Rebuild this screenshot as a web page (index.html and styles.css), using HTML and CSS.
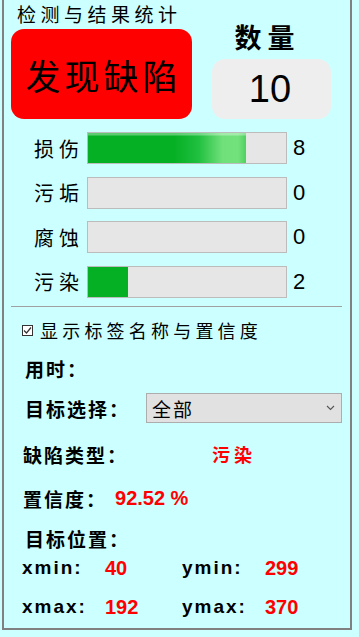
FILE: index.html
```html
<!DOCTYPE html>
<html lang="zh">
<head>
    <meta charset="UTF-8">
    <meta name="viewport" content="width=device-width, initial-scale=1.0">
    <title>检测与结果统计</title>
    <link rel="stylesheet" href="styles.css">
</head>
<body>
    <div class="group">
        <div class="group-title">检测与结果统计</div>

        <div class="top">
            <div class="alarm">发现缺陷</div>
            <div class="count-col">
                <div class="count-title">数量</div>
                <div class="count-box">10</div>
            </div>
        </div>

        <div class="bars">
            <div class="bar-row">
                <span class="bar-label">损伤</span>
                <div class="bar"><div class="fill shine" style="width: 80%"></div></div>
                <span class="bar-num">8</span>
            </div>
            <div class="bar-row">
                <span class="bar-label">污垢</span>
                <div class="bar"><div class="fill" style="width: 0%"></div></div>
                <span class="bar-num">0</span>
            </div>
            <div class="bar-row">
                <span class="bar-label">腐蚀</span>
                <div class="bar"><div class="fill" style="width: 0%"></div></div>
                <span class="bar-num">0</span>
            </div>
            <div class="bar-row">
                <span class="bar-label">污染</span>
                <div class="bar"><div class="fill" style="width: 20%"></div></div>
                <span class="bar-num">2</span>
            </div>
        </div>

        <div class="sep"></div>

        <div class="check-row">
            <span class="checkbox">
                <svg width="9" height="9" viewBox="0 0 9 9"><path d="M1 4.5 L3.5 7 L8 1.5" fill="none" stroke="#333" stroke-width="1.2"/></svg>
            </span>
            <span class="check-text">显示标签名称与置信度</span>
        </div>

        <div class="line time-line"><span class="lbl">用时：</span></div>

        <div class="line select-line">
            <span class="lbl">目标选择：</span>
            <div class="select">
                <span>全部</span>
                <svg width="9" height="6" viewBox="0 0 9 6"><path d="M1 1 L4.5 4.5 L8 1" fill="none" stroke="#555" stroke-width="1.1"/></svg>
            </div>
        </div>

        <div class="line type-line">
            <span class="lbl">缺陷类型：</span>
            <span class="type-val">污染</span>
        </div>

        <div class="line conf-line">
            <span class="lbl">置信度：</span><span class="red-num conf-val">92.52 %</span>
        </div>

        <div class="line pos-line"><span class="lbl">目标位置：</span></div>

        <div class="coords first">
            <span class="coord-lbl">xmin:</span><span class="red-num">40</span>
            <span class="coord-lbl">ymin:</span><span class="red-num">299</span>
        </div>
        <div class="coords second">
            <span class="coord-lbl">xmax:</span><span class="red-num">192</span>
            <span class="coord-lbl">ymax:</span><span class="red-num">370</span>
        </div>
    </div>
</body>
</html>
```

FILE: styles.css
```css
body {
    margin: 0;
    background-color: #ccffff;
    font-family: "Noto Sans CJK SC", sans-serif;
    color: #000;
}
.group {
    margin-left: 2px;
    width: 331px;
    border: 2px solid #808080;
    border-top: none;
    padding: 0 8px 9px 7px;
}
.group-title {
    font-size: 19px;
    line-height: 22px;
    padding-top: 3px;
    letter-spacing: 4.5px;
    margin-left: 6px;
}
.top {
    display: flex;
    align-items: flex-end;
    margin-top: -3px;
}
.alarm {
    width: 181px;
    height: 90px;
    background-color: #ff0000;
    border-radius: 13px;
    display: flex;
    align-items: center;
    justify-content: center;
    font-size: 35px;
    letter-spacing: 4px;
    padding-left: 4px;
    box-sizing: border-box;
}
.count-col {
    margin-left: 20px;
    width: 119px;
}
.count-title {
    font-size: 27px;
    font-weight: bold;
    letter-spacing: 6px;
    line-height: 30px;
    text-align: center;
    margin-bottom: 7px;
    margin-left: -8px;
}
.count-box {
    height: 60px;
    background-color: #eeeeee;
    border-radius: 13px;
    display: flex;
    align-items: center;
    justify-content: center;
    font-family: "Liberation Sans", Arial, sans-serif;
    font-size: 38px;
    padding-right: 3px;
}
.bars {
    margin-top: 13px;
    display: flex;
    flex-direction: column;
    gap: 12.5px;
}
.bar-row {
    display: flex;
    align-items: center;
    padding-left: 23px;
}
.bar-label {
    width: 53px;
    font-size: 20px;
    letter-spacing: 5px;
}
.bar {
    width: 198px;
    height: 30px;
    background-color: #e6e6e6;
    border: 1px solid #bcbcbc;
}
.fill {
    height: 100%;
    background-color: #06b025;
}
.fill.shine {
    background:
        linear-gradient(to bottom, rgba(255, 255, 255, 0.35) 0, rgba(255, 255, 255, 0.35) 2px, transparent 3px),
        linear-gradient(to right, #06b025 0%, #06b025 55%, #20c040 70%, #70e07a 85%, #72e27c 95%, #4fd060 100%);
}
.bar-num {
    margin-left: 6px;
    font-family: "Liberation Sans", Arial, sans-serif;
    font-size: 22px;
}
.sep {
    margin-top: 8.5px;
    height: 1px;
    background-color: #a0a0a0;
}
.check-row {
    margin-top: 11px;
    height: 24px;
    display: flex;
    align-items: center;
    padding-left: 11px;
}
.checkbox {
    width: 9px;
    height: 9px;
    border: 1px solid #333;
    background-color: #fff;
    display: flex;
    align-items: center;
    justify-content: center;
}
.check-text {
    margin-left: 7px;
    font-size: 18px;
    letter-spacing: 4.2px;
}
.line {
    display: flex;
    align-items: center;
    height: 24px;
    padding-left: 14px;
}
.lbl {
    font-size: 19px;
    font-weight: bold;
    letter-spacing: 2px;
}
.time-line {
    margin-top: 14px;
}
.select-line {
    margin-top: 13px;
    height: 30px;
}
.select {
    margin-left: auto;
    width: 183px;
    height: 28px;
    background-color: #e1e1e1;
    border: 1px solid #adadad;
    display: flex;
    align-items: center;
    justify-content: space-between;
    padding: 0 6px 0 5px;
    font-size: 19px;
    letter-spacing: 2px;
}
.type-line {
    margin-top: 19px;
    padding-left: 12px;
}
.type-val {
    margin-left: 84px;
    color: #ff0000;
    font-size: 18px;
    font-weight: bold;
    letter-spacing: 4px;
}
.conf-line {
    margin-top: 20px;
    padding-left: 12px;
}
.red-num {
    color: #ff0000;
    font-family: "Liberation Sans", Arial, sans-serif;
    font-size: 20px;
    font-weight: bold;
}
.conf-val {
    margin-left: 8px;
}
.pos-line {
    margin-top: 16px;
}
.coords {
    display: grid;
    grid-template-columns: 83px 77px 83px auto;
    align-items: center;
    height: 24px;
    padding-left: 11px;
}
.coords.first {
    margin-top: 6px;
}
.coords.second {
    margin-top: 15px;
}
.coord-lbl {
    font-family: "Liberation Sans", Arial, sans-serif;
    font-size: 19px;
    font-weight: bold;
    letter-spacing: 2px;
}
```
